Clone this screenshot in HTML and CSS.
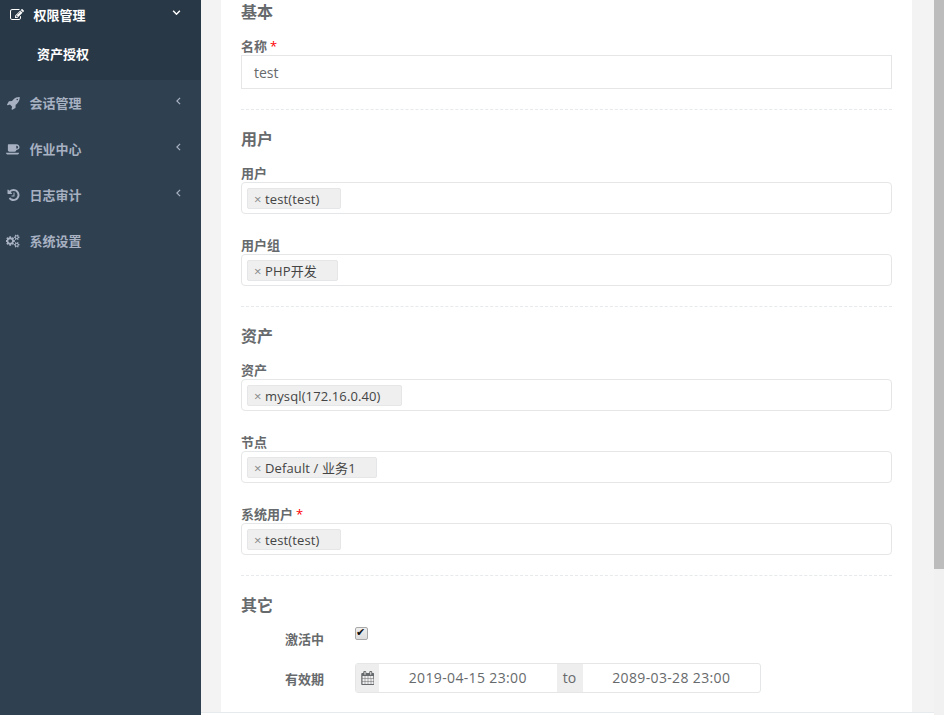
FILE: index.html
```html
<!DOCTYPE html>
<html lang="zh">
<head>
<meta charset="utf-8">
<title>资产授权</title>
<link rel="stylesheet" href="styles.css">
</head>
<body>
<aside class="sidebar">
  <div class="group-active">
    <div class="nav-item nav-title">
      <svg class="nav-icon" viewBox="0 0 1792 1792"><path d="M888 1184l116-116-152-152-116 116v56h96v96h56zm440-720q-16-16-33 1l-350 350q-17 17-1 33t33-1l350-350q17-17 1-33zm80 594v190q0 119-84.5 203.5t-203.5 84.5h-832q-119 0-203.5-84.5t-84.5-203.5v-832q0-119 84.5-203.5t203.5-84.5h832q63 0 117 25 15 7 18 23 3 17-9 29l-49 49q-14 14-32 8-23-6-45-6h-832q-66 0-113 47t-47 113v832q0 66 47 113t113 47h832q66 0 113-47t47-113v-126q0-13 9-22l64-64q15-15 35-7t20 29zm-96-738l288 288-672 672h-288v-288zm444 132l-92 92-288-288 92-92q27-27 68-27t68 27l152 152q27 27 27 68t-27 68z"/></svg>
      <span class="nav-label">权限管理</span>
      <svg class="arrow-down" viewBox="0 0 10 6"><path d="M1 1l4 4 4-4"/></svg>
    </div>
    <div class="nav-sub">资产授权</div>
  </div>
  <div class="nav-item">
    <svg class="nav-icon" viewBox="0 0 1728 1792"><path d="M1504 448q0-40-28-68t-68-28-68 28-28 68 28 68 68 28 68-28 28-68zm224-288q0 249-75.5 430.5t-253.5 360.5q-81 80-195 176l-20 379q-2 16-16 26l-384 224q-7 4-16 4-12 0-23-9l-64-64q-13-14-8-32l85-276-281-281-276 85q-3 1-9 1-14 0-23-9l-64-64q-17-19-5-39l224-384q10-14 26-16l379-20q96-114 176-195 188-187 358-258t431-71q14 0 24 9.5t10 22.5z"/></svg>
    <span class="nav-label">会话管理</span>
    <svg class="arrow-left" viewBox="0 0 6 10"><path d="M5 1L1 5l4 4"/></svg>
  </div>
  <div class="nav-item">
    <svg class="nav-icon" viewBox="0 0 1920 1792"><path d="M1664 640q0-80-56-136t-136-56h-64v384h64q80 0 136-56t56-136zm-1664 768h1792q0 106-75 181t-181 75h-1280q-106 0-181-75t-75-181zm1856-768q0 159-112.5 271.5t-271.5 112.5h-64v32q0 92-66 158t-158 66h-704q-92 0-158-66t-66-158v-736q0-26 19-45t45-19h1152q159 0 271.5 112.5t112.5 271.5z"/></svg>
    <span class="nav-label">作业中心</span>
    <svg class="arrow-left" viewBox="0 0 6 10"><path d="M5 1L1 5l4 4"/></svg>
  </div>
  <div class="nav-item">
    <svg class="nav-icon" viewBox="0 0 1664 1792"><path d="M1664 896q0 156-61 298t-164 245-245 164-298 61q-172 0-327-72.5t-264-204.5q-7-10-6.5-22.5t8.5-20.5l137-138q10-9 25-9 16 2 23 12 73 95 179 147t225 52q104 0 198.5-40.5t163.5-109.5 109.5-163.5 40.5-198.5-40.5-198.5-109.5-163.5-163.5-109.5-198.5-40.5q-98 0-188 35.5t-160 101.5l137 138q31 30 14 69-17 40-59 40h-448q-26 0-45-19t-19-45v-448q0-42 40-59 39-17 69 14l130 129q107-101 244.5-156.5t284.5-55.5q156 0 298 61t245 164 164 245 61 298zm-640-288v448q0 14-9 23t-23 9h-320q-14 0-23-9t-9-23v-64q0-14 9-23t23-9h224v-352q0-14 9-23t23-9h64q14 0 23 9t9 23z"/></svg>
    <span class="nav-label">日志审计</span>
    <svg class="arrow-left" viewBox="0 0 6 10"><path d="M5 1L1 5l4 4"/></svg>
  </div>
  <div class="nav-item">
    <svg class="nav-icon" viewBox="0 0 1920 1792"><path d="M832 896q0-106-75-181t-181-75-181 75-75 181 75 181 181 75 181-75 75-181zm768 512q0-52-38-90t-90-38-90 38-38 90q0 53 37.5 90.5t90.5 37.5 90.5-37.5 37.5-90.5zm0-1024q0-52-38-90t-90-38-90 38-38 90q0 53 37.5 90.5t90.5 37.5 90.5-37.5 37.5-90.5zm-384 421v185q0 10-7 19.5t-16 10.5l-155 24q-11 35-32 76 34 48 90 115 7 11 7 20 0 12-7 19-23 30-82.5 89.5t-78.5 59.5q-11 0-21-7l-115-90q-37 19-77 31-11 108-23 155-7 24-30 24h-186q-11 0-20-7.5t-10-17.5l-23-153q-34-10-75-31l-118 89q-7 7-20 7-11 0-21-8-144-133-144-160 0-9 7-19 10-14 41-53t47-61q-23-44-35-82l-152-24q-10-1-17-9.5t-7-19.5v-185q0-10 7-19.5t16-10.5l155-24q11-35 32-76-34-48-90-115-7-11-7-20 0-12 7-20 22-30 82-89t79-59q11 0 21 7l115 90q34-18 77-32 11-108 23-154 7-24 30-24h186q11 0 20 7.5t10 17.5l23 153q34 10 75 31l118-89q8-7 20-7 11 0 21 8 144 133 144 160 0 8-7 19-12 16-42 54t-45 60q23 48 34 82l152 23q10 2 17 10.5t7 19.5zm640 533v140q0 16-149 31-12 27-30 52 51 113 51 138 0 4-4 7-122 71-124 71-8 0-46-47t-52-68q-20 2-30 2t-30-2q-14 21-52 68t-46 47q-2 0-124-71-4-3-4-7 0-25 51-138-18-25-30-52-149-15-149-31v-140q0-16 149-31 13-29 30-52-51-113-51-138 0-4 4-7 4-2 35-20t59-34 30-16q8 0 46 46.5t52 67.5q20-2 30-2t30 2q51-71 92-112l6-2q4 0 124 70 4 3 4 7 0 25-51 138 17 23 30 52 149 15 149 31zm0-1024v140q0 16-149 31-12 27-30 52 51 113 51 138 0 4-4 7-122 71-124 71-8 0-46-47t-52-68q-20 2-30 2t-30-2q-14 21-52 68t-46 47q-2 0-124-71-4-3-4-7 0-25 51-138-18-25-30-52-149-15-149-31v-140q0-16 149-31 13-29 30-52-51-113-51-138 0-4 4-7 4-2 35-20t59-34 30-16q8 0 46 46.5t52 67.5q20-2 30-2t30 2q51-71 92-112l6-2q4 0 124 70 4 3 4 7 0 25-51 138 17 23 30 52 149 15 149 31z"/></svg>
    <span class="nav-label">系统设置</span>
  </div>
</aside>

<main class="main">
  <form class="card">
    <h3 class="section-title first">基本</h3>
    <div class="field">
      <div class="field-label">名称 <span class="req">*</span></div>
      <div class="text-input">test</div>
    </div>
    <div class="divider"></div>

    <h3 class="section-title">用户</h3>
    <div class="field">
      <div class="field-label">用户</div>
      <div class="select"><span class="tag"><span class="tag-x">×</span>test(test)</span></div>
    </div>
    <div class="field">
      <div class="field-label">用户组</div>
      <div class="select"><span class="tag"><span class="tag-x">×</span>PHP开发</span></div>
    </div>
    <div class="divider"></div>

    <h3 class="section-title">资产</h3>
    <div class="field">
      <div class="field-label">资产</div>
      <div class="select"><span class="tag"><span class="tag-x">×</span>mysql(172.16.0.40)</span></div>
    </div>
    <div class="field">
      <div class="field-label">节点</div>
      <div class="select"><span class="tag"><span class="tag-x">×</span>Default / 业务1</span></div>
    </div>
    <div class="field">
      <div class="field-label">系统用户 <span class="req">*</span></div>
      <div class="select"><span class="tag"><span class="tag-x">×</span>test(test)</span></div>
    </div>
    <div class="divider"></div>

    <h3 class="section-title">其它</h3>
    <div class="row row-check">
      <div class="row-label">激活中</div>
      <input class="check" type="checkbox" checked>
    </div>
    <div class="row row-date">
      <div class="row-label">有效期</div>
      <div class="date-range">
        <span class="addon addon-cal"><svg class="cal-icon" viewBox="0 0 1664 1792"><path d="M192 1664h288v-288h-288v288zm352 0h320v-288h-320v288zm-352-352h288v-320h-288v320zm352 0h320v-320h-320v320zm-352-384h288v-288h-288v288zm736 736h320v-288h-320v288zm-384-736h320v-288h-320v288zm768 736h288v-288h-288v288zm-384-352h320v-320h-320v320zm-352-864v-288q0-13-9.5-22.5t-22.5-9.5h-64q-13 0-22.5 9.5t-9.5 22.5v288q0 13 9.5 22.5t22.5 9.5h64q13 0 22.5-9.5t9.5-22.5zm736 864h288v-320h-288v320zm-384-384h320v-288h-320v288zm352 0h288v-288h-288v288zm32-480v-288q0-13-9.5-22.5t-22.5-9.5h-64q-13 0-22.5 9.5t-9.5 22.5v288q0 13 9.5 22.5t22.5 9.5h64q13 0 22.5-9.5t9.5-22.5zm384-64v1280q0 52-38 90t-90 38h-1408q-52 0-90-38t-38-90v-1280q0-52 38-90t90-38h128v-96q0-66 47-113t113-47h64q66 0 113 47t47 113v96h384v-96q0-66 47-113t113-47h64q66 0 113 47t47 113v96h128q52 0 90 38t38 90z"/></svg></span>
        <span class="date-value">2019-04-15 23:00</span>
        <span class="addon addon-to">to</span>
        <span class="date-value">2089-03-28 23:00</span>
      </div>
    </div>
  </form>
  <div class="footer"></div>
</main>

<div class="scrollbar"><div class="thumb"></div></div>
</body>
</html>
```

FILE: styles.css
```css
* { box-sizing: border-box; }
html, body { margin: 0; height: 715px; overflow: hidden; }
body {
  display: flex;
  background: #f3f3f4;
  color: #676a6c;
  font-family: "Open Sans", "Noto Sans CJK SC", sans-serif;
  font-size: 13px;
}

/* Sidebar */
.sidebar { flex: 0 0 201px; background: #2f4050; color: #a7b1c2; }
.group-active { height: 80px; background: #293846; color: #fff; padding-left: 4px; }
.nav-item {
  display: flex;
  align-items: center;
  height: 46px;
  padding-left: 6px;
  font-weight: 700;
  font-size: 13px;
}
.nav-title { height: 30px; }
.nav-icon { width: 14px; height: 14px; fill: currentColor; flex: none; }
.nav-label { margin: -2px 0 0 9.5px; font-family: "Noto Sans CJK SC", sans-serif; }
.arrow-left {
  width: 5px; height: 8px;
  margin: -4px 20px 0 auto;
  fill: none; stroke: currentColor; stroke-width: 1.5;
}
.arrow-down {
  width: 9px; height: 5px;
  margin: -6px 20px 0 auto;
  fill: none; stroke: currentColor; stroke-width: 1.8;
}
.nav-sub {
  padding: 14px 0 0 33px;
  line-height: 20px;
  font-weight: 700;
  font-family: "Noto Sans CJK SC", sans-serif;
}

/* Main */
.main { flex: 1; min-width: 0; }
.card {
  margin: 0 22px 0 20px;
  height: 712px;
  background: #fff;
  padding: 0 20px;
  overflow: hidden;
}
.footer { height: 3px; background: #fff; border-top: 1px solid #e7eaec; }

.section-title {
  margin: 19px 0 0;
  height: 20px;
  line-height: 18px;
  font-size: 16px;
  font-weight: 700;
  color: #676a6c;
  font-family: "Noto Sans CJK SC", sans-serif;
}
.section-title.first { margin-top: 2px; }

.field { margin-top: 15px; }
.field + .field { margin-top: 22px; }
.section-title.first + .field { margin-top: 15px; }
.field-label {
  height: 18px;
  line-height: 18px;
  font-size: 13px;
  font-weight: 700;
  font-family: "Noto Sans CJK SC", sans-serif;
}
.req { color: #f00; font-weight: 400; font-size: 13px; font-family: "Open Sans", sans-serif; }
.text-input {
  height: 34px;
  line-height: 34px;
  border: 1px solid #e5e6e7;
  padding: 0 12px;
  font-size: 14px;
}
.select {
  height: 32px;
  border: 1px solid #e5e6e7;
  border-radius: 4px;
  padding: 5px;
  display: flex;
  align-items: flex-start;
}
.tag {
  display: inline-flex;
  align-items: center;
  height: 21px;
  background: #efefef;
  border: 1px solid #e5e6e7;
  border-radius: 2px;
  padding: 0 20.5px 0 6px;
  font-size: 13px;
  letter-spacing: .12px;
  color: #444;
}
.tag-x { color: #888; margin-right: 3.5px; }
.divider { margin-top: 20px; border-top: 1px dashed #e7eaec; }

.row { display: flex; }
.row-label {
  flex: 0 0 70px;
  margin-left: 44px;
  font-weight: 700;
  font-family: "Noto Sans CJK SC", sans-serif;
}
.row-check { margin-top: 12px; height: 36px; }
.row-check .row-label { padding-top: 2px; }
.check {
  appearance: none;
  position: relative;
  width: 13px;
  height: 13px;
  margin: 0;
  background: linear-gradient(#eee, #ddd);
  border: 1px solid #a9a9a9;
  border-radius: 2px;
}
.check:checked::after {
  content: "✔";
  position: absolute;
  left: 0;
  top: -2px;
  font: 11px/13px "DejaVu Sans", sans-serif;
  color: #111;
}
.row-date { align-items: center; height: 30px; }
.date-range {
  display: flex;
  width: 406px;
  height: 30px;
  border: 1px solid #e5e6e7;
  border-radius: 3px;
  font-size: 14px;
}
.addon {
  display: flex;
  align-items: center;
  justify-content: center;
  background: #eee;
  flex: none;
  padding-bottom: 2px;
}
.addon-cal { width: 23px; padding-bottom: 0; }
.addon-to { width: 26px; }
.cal-icon { width: 13px; height: 14px; fill: #676a6c; }
.date-value {
  flex: 1;
  display: flex;
  align-items: center;
  justify-content: center;
  padding-bottom: 2px;
  letter-spacing: .35px;
}

/* Scrollbar */
.scrollbar { flex: 0 0 10px; background: #f1f1f1; }
.thumb { height: 569px; background: #bcbcbc; }
```
